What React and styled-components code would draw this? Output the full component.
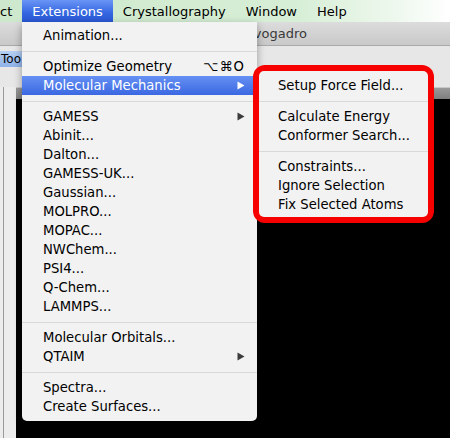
import React from "react";
import styled, { createGlobalStyle } from "styled-components";

const Global = createGlobalStyle`
  html, body {
    margin: 0;
    padding: 0;
    background: #000;
    overflow: hidden;
  }
  body {
    font-family: "DejaVu Sans", "Liberation Sans", sans-serif;
  }
`;

const Screen = styled.div`
  position: relative;
  width: 450px;
  height: 438px;
  display: flex;
  flex-direction: column;
  overflow: hidden;
  background: #000;
`;

const MenuBar = styled.div`
  height: 22px;
  display: flex;
  align-items: stretch;
  background: linear-gradient(to right, #cde8cc 0%, #d6eed5 65%, #eef8ee 88%, #ffffff 100%);
  font-size: 13px;
  color: #000;
  flex-shrink: 0;
`;

const BarItem = styled.div`
  display: flex;
  align-items: center;
  padding: 0 ${(p) => (p.$pad != null ? p.$pad : 10)}px;
  color: ${(p) => (p.$active ? "#fff" : "#000")};
  background: ${(p) =>
    p.$active ? "linear-gradient(#6a95f6, #3466e0 60%, #2a58d4)" : "transparent"};
`;

const TitleBar = styled.div`
  height: 23px;
  flex-shrink: 0;
  background: linear-gradient(#dcdcdc, #c9c9c9);
  border-bottom: 1px solid #a9a9a9;
  display: flex;
  align-items: center;
  padding-left: 155px;
  font-size: 13px;
  color: #3a3a3a;
`;

const Toolbar = styled.div`
  height: 41px;
  flex-shrink: 0;
  background: #e7e7e7;
  display: flex;
  align-items: flex-start;
  padding-top: 5px;
  box-sizing: border-box;
`;

const ToolButton = styled.div`
  width: 22px;
  height: 16px;
  background: linear-gradient(#b6d0f4, #8fb2e8);
  font-size: 12px;
  white-space: nowrap;
  line-height: 16px;
  padding-left: 1px;
  box-sizing: border-box;
`;

const Body = styled.div`
  flex: 1;
  display: flex;
`;

const Dock = styled.div`
  width: 16px;
  background: #ececec;
  display: flex;
  padding-left: 3px;
  box-sizing: border-box;
`;

const DockRule = styled.div`
  width: 1px;
  background: #9a9a9a;
`;

const Main = styled.div`
  flex: 1;
  display: flex;
  flex-direction: column;
`;

const TabBand = styled.div`
  height: 11px;
  background: linear-gradient(#9a9a9a, #7e7e7e);
  border-top: 1px solid #c8c8c8;
`;

const Canvas = styled.div`
  flex: 1;
  background: #000;
`;

const Menu = styled.div`
  position: absolute;
  left: 22px;
  top: 22px;
  width: 235px;
  padding: 4px 0 5px;
  background: #f2f2f2;
  border-radius: 0 0 5px 5px;
  box-shadow: 0 3px 8px rgba(0, 0, 0, 0.35);
  font-size: 13.2px;
  color: #000;
`;

const Item = styled.div`
  height: 19px;
  display: flex;
  align-items: center;
  padding: 0 12px 0 ${(p) => p.$indent || 21}px;
  color: ${(p) => (p.$hot ? "#fff" : "#000")};
  background: ${(p) =>
    p.$hot ? "linear-gradient(#6590f3, #3b68e2)" : "transparent"};
  white-space: nowrap;
`;

const Label = styled.span`
  flex: 1;
`;

const Shortcut = styled.span`
  letter-spacing: 1px;
`;

const Sep = styled.div`
  height: 12px;
  display: flex;
  align-items: center;
  &::after {
    content: "";
    flex: 1;
    height: 1px;
    background: #d9d9d9;
  }
`;

const Arrow = ({ light }) => (
  <svg width="8" height="9" viewBox="0 0 8 9">
    <path d="M0.5 0.5 L7.5 4.5 L0.5 8.5 Z" fill={light ? "#fff" : "#3c3c3c"} />
  </svg>
);

const SubFrame = styled.div`
  position: absolute;
  left: 253px;
  top: 65px;
  width: 181px;
  padding: 6px;
  box-sizing: border-box;
  background: #f70000;
  border-radius: 12px;
`;

const SubMenu = styled.div`
  background: #f2f2f2;
  border-radius: 5px;
  padding: 5px 0 3px;
  font-size: 13.2px;
`;

const mainItems = [
  { t: "Animation..." },
  "sep",
  { t: "Optimize Geometry", k: "⌥⌘O" },
  { t: "Molecular Mechanics", sub: true, hot: true },
  "sep",
  { t: "GAMESS", sub: true },
  { t: "Abinit..." },
  { t: "Dalton..." },
  { t: "GAMESS-UK..." },
  { t: "Gaussian..." },
  { t: "MOLPRO..." },
  { t: "MOPAC..." },
  { t: "NWChem..." },
  { t: "PSI4..." },
  { t: "Q-Chem..." },
  { t: "LAMMPS..." },
  "sep",
  { t: "Molecular Orbitals..." },
  { t: "QTAIM", sub: true },
  "sep",
  { t: "Spectra..." },
  { t: "Create Surfaces..." },
];

const subItems = [
  "Setup Force Field...",
  "sep",
  "Calculate Energy",
  "Conformer Search...",
  "sep",
  "Constraints...",
  "Ignore Selection",
  "Fix Selected Atoms",
];

export default function App() {
  return (
    <>
      <Global />
      <Screen>
        <MenuBar>
          <BarItem $pad={0} style={{ paddingRight: 10 }}>ct</BarItem>
          <BarItem $active>Extensions</BarItem>
          <BarItem>Crystallography</BarItem>
          <BarItem>Window</BarItem>
          <BarItem>Help</BarItem>
        </MenuBar>
        <TitleBar>untitled.cml - Avogadro</TitleBar>
        <Toolbar>
          <ToolButton>Too</ToolButton>
        </Toolbar>
        <Body>
          <Dock>
            <DockRule />
          </Dock>
          <Main>
            <TabBand />
            <Canvas />
          </Main>
        </Body>

        <Menu>
          {mainItems.map((it, i) =>
            it === "sep" ? (
              <Sep key={i} />
            ) : (
              <Item key={i} $hot={it.hot}>
                <Label>{it.t}</Label>
                {it.k && <Shortcut>{it.k}</Shortcut>}
                {it.sub && <Arrow light={it.hot} />}
              </Item>
            )
          )}
        </Menu>

        <SubFrame>
          <SubMenu>
            {subItems.map((t, i) =>
              t === "sep" ? (
                <Sep key={i} />
              ) : (
                <Item key={i} $indent={19}>
                  <Label>{t}</Label>
                </Item>
              )
            )}
          </SubMenu>
        </SubFrame>
      </Screen>
    </>
  );
}
